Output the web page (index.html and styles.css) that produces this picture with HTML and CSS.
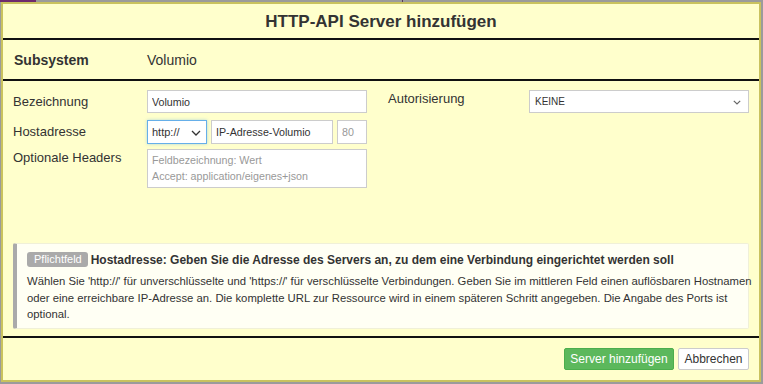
FILE: index.html
```html
<!DOCTYPE html>
<html lang="de">
<head>
<meta charset="utf-8">
<title>HTTP-API Server hinzufügen</title>
<link rel="stylesheet" href="styles.css">
</head>
<body>
<div class="strip"><span class="strip-purple"></span><span class="strip-mark"></span></div>
<div class="dialog">
  <header class="dlg-head">HTTP-API Server hinzufügen</header>
  <section class="subsys">
    <span class="subsys-label">Subsystem</span>
    <span class="subsys-value">Volumio</span>
  </section>
  <main class="dlg-body">
    <div class="form">
      <div class="col-left">
        <div class="row row-1">
          <label class="lbl">Bezeichnung</label>
          <input class="inp inp-wide" type="text" value="Volumio">
        </div>
        <div class="row row-2">
          <label class="lbl">Hostadresse</label>
          <div class="host">
            <div class="sel sel-proto focused"><span>http://</span>
              <svg class="chev chev-proto" width="10" height="6" viewBox="0 0 10 6"><path d="M1 1l4 4 4-4" fill="none" stroke="#333" stroke-width="1.3"/></svg>
            </div>
            <input class="inp inp-host" type="text" value="IP-Adresse-Volumio">
            <input class="inp inp-port" type="text" placeholder="80">
          </div>
        </div>
        <div class="row row-3">
          <label class="lbl lbl-3">Optionale Headers</label>
          <textarea class="txa" placeholder="Feldbezeichnung: Wert&#10;Accept: application/eigenes+json"></textarea>
        </div>
      </div>
      <div class="col-right">
        <div class="row">
          <label class="lbl lbl-r">Autorisierung</label>
          <div class="sel sel-auth"><span>KEINE</span>
            <svg class="chev chev-auth" width="8" height="5" viewBox="0 0 8 5"><path d="M0.8 0.8l3.2 3.2 3.2-3.2" fill="none" stroke="#666" stroke-width="1.2"/></svg>
          </div>
        </div>
      </div>
    </div>
    <div class="info">
      <div class="info-head"><span class="badge">Pflichtfeld</span><span class="info-title">Hostadresse: Geben Sie die Adresse des Servers an, zu dem eine Verbindung eingerichtet werden soll</span></div>
      <p class="info-text">Wählen Sie 'http://' für unverschlüsselte und 'https://' für verschlüsselte Verbindungen. Geben Sie im mittleren Feld einen auflösbaren Hostnamen<br>oder eine erreichbare IP-Adresse an. Die komplette URL zur Ressource wird in einem späteren Schritt angegeben. Die Angabe des Ports ist<br>optional.</p>
    </div>
  </main>
  <footer class="dlg-foot">
    <button class="btn btn-ok">Server hinzufügen</button>
    <button class="btn btn-cancel">Abbrechen</button>
  </footer>
</div>
</body>
</html>
```
FILE: styles.css
```css
html, body {
  margin: 0;
  padding: 0;
}
body {
  width: 763px;
  height: 384px;
  overflow: hidden;
  background: #9b9b9b;
  font-family: "Liberation Sans", Arial, sans-serif;
  color: #333;
}
.strip {
  display: flex;
  height: 2px;
}
.strip-purple {
  width: 36px;
  background: #6e2a6e;
}
.strip-mark {
  width: 1px;
  margin-left: 366px;
  background: #5a3a5a;
}
.dialog {
  margin-left: 1px;
  width: 756px;
  height: 376px;
  border: 2px solid #c9c25e;
  background: #ffffcc;
  display: flex;
  flex-direction: column;
}
.dlg-head {
  height: 34px;
  border-bottom: 2px solid #111;
  text-align: center;
  font-weight: bold;
  font-size: 17px;
  line-height: 35px;
  color: #333;
}
.subsys {
  height: 38px;
  border-bottom: 2px solid #111;
  display: flex;
  align-items: center;
  font-size: 14px;
  padding-top: 1px;
}
.subsys-label {
  font-weight: bold;
  width: 133px;
  padding-left: 11px;
}
.dlg-body {
  flex: 1;
  display: flex;
  flex-direction: column;
  padding: 9px 10px 7px 10px;
}
.form {
  flex: 1;
  display: flex;
}
.col-left {
  width: 375px;
  display: flex;
  flex-direction: column;
}
.row-2 {
  margin-top: 6px;
}
.row-3 {
  margin-top: 5px;
}
.col-right {
  flex: 1;
}
.row {
  display: flex;
  align-items: flex-start;
}
.lbl {
  width: 134px;
  font-size: 13px;
  line-height: 24px;
  color: #333;
}
.lbl-3 {
  line-height: 18px;
}
.lbl-r {
  width: 141px;
  line-height: 18px;
}
.inp, .txa, .sel {
  box-sizing: border-box;
  border: 1px solid #ccc;
  background: #fff;
  font-family: "Liberation Sans", Arial, sans-serif;
  font-size: 10.7px;
  color: #333;
  margin: 0;
}
.inp {
  height: 23px;
  padding: 0 4px;
  outline: none;
}
.inp::placeholder, .txa::placeholder {
  color: #999;
}
.inp-wide {
  width: 220px;
}
.host {
  display: flex;
  gap: 4px;
}
.sel {
  position: relative;
  height: 23px;
  display: flex;
  align-items: center;
  padding: 0 5px;
}
.chev {
  position: absolute;
}
.chev-proto {
  right: 5px;
  top: 9px;
}
.chev-auth {
  right: 7px;
  top: 9px;
}
.sel-proto {
  width: 60px;
  height: 24px;
  padding-left: 4px;
  font-size: 11px;
}
.focused {
  border-color: #66afe9;
  box-shadow: 0 0 3px rgba(102, 175, 233, 0.5);
}
.inp-host {
  width: 122px;
  height: 24px;
}
.inp-port {
  width: 30px;
  height: 24px;
}
.txa {
  width: 220px;
  height: 39px;
  resize: none;
  padding: 2px 4px;
  line-height: 16px;
  overflow: hidden;
  outline: none;
}
.sel-auth {
  width: 220px;
  font-size: 10px;
  padding-left: 5px;
}
.info {
  background: #fffff4;
  border: 1px solid #f0f0d8;
  border-left: 4px solid #aaa;
  border-radius: 2px;
  padding: 8px 10px 6px 10px;
  height: 70px;
}
.info-head {
  display: flex;
  align-items: center;
  gap: 3px;
}
.badge {
  background: #aaa;
  color: #fff;
  font-size: 11px;
  line-height: 15px;
  padding: 0 6px 0 7px;
  border-radius: 3px;
}
.info-title {
  font-weight: bold;
  font-size: 12px;
  color: #333;
}
.info-text {
  margin: 6px 0 0 0;
  font-size: 11.3px;
  line-height: 16.5px;
  color: #333;
  white-space: nowrap;
}
.dlg-foot {
  border-top: 2px solid #111;
  display: flex;
  justify-content: flex-end;
  gap: 4px;
  padding: 10px 10px 0 0;
  height: 32px;
}
.btn {
  font-family: "Liberation Sans", Arial, sans-serif;
  font-size: 12px;
  height: 22px;
  padding: 0 5px;
  border-radius: 2px;
  margin: 0;
  white-space: nowrap;
}
.btn-ok {
  background: #5cb85c;
  border: 1px solid #4cae4c;
  color: #fff;
  width: 110px;
}
.btn-cancel {
  background: #fff;
  border: 1px solid #ccc;
  color: #333;
  width: 71px;
}
```
